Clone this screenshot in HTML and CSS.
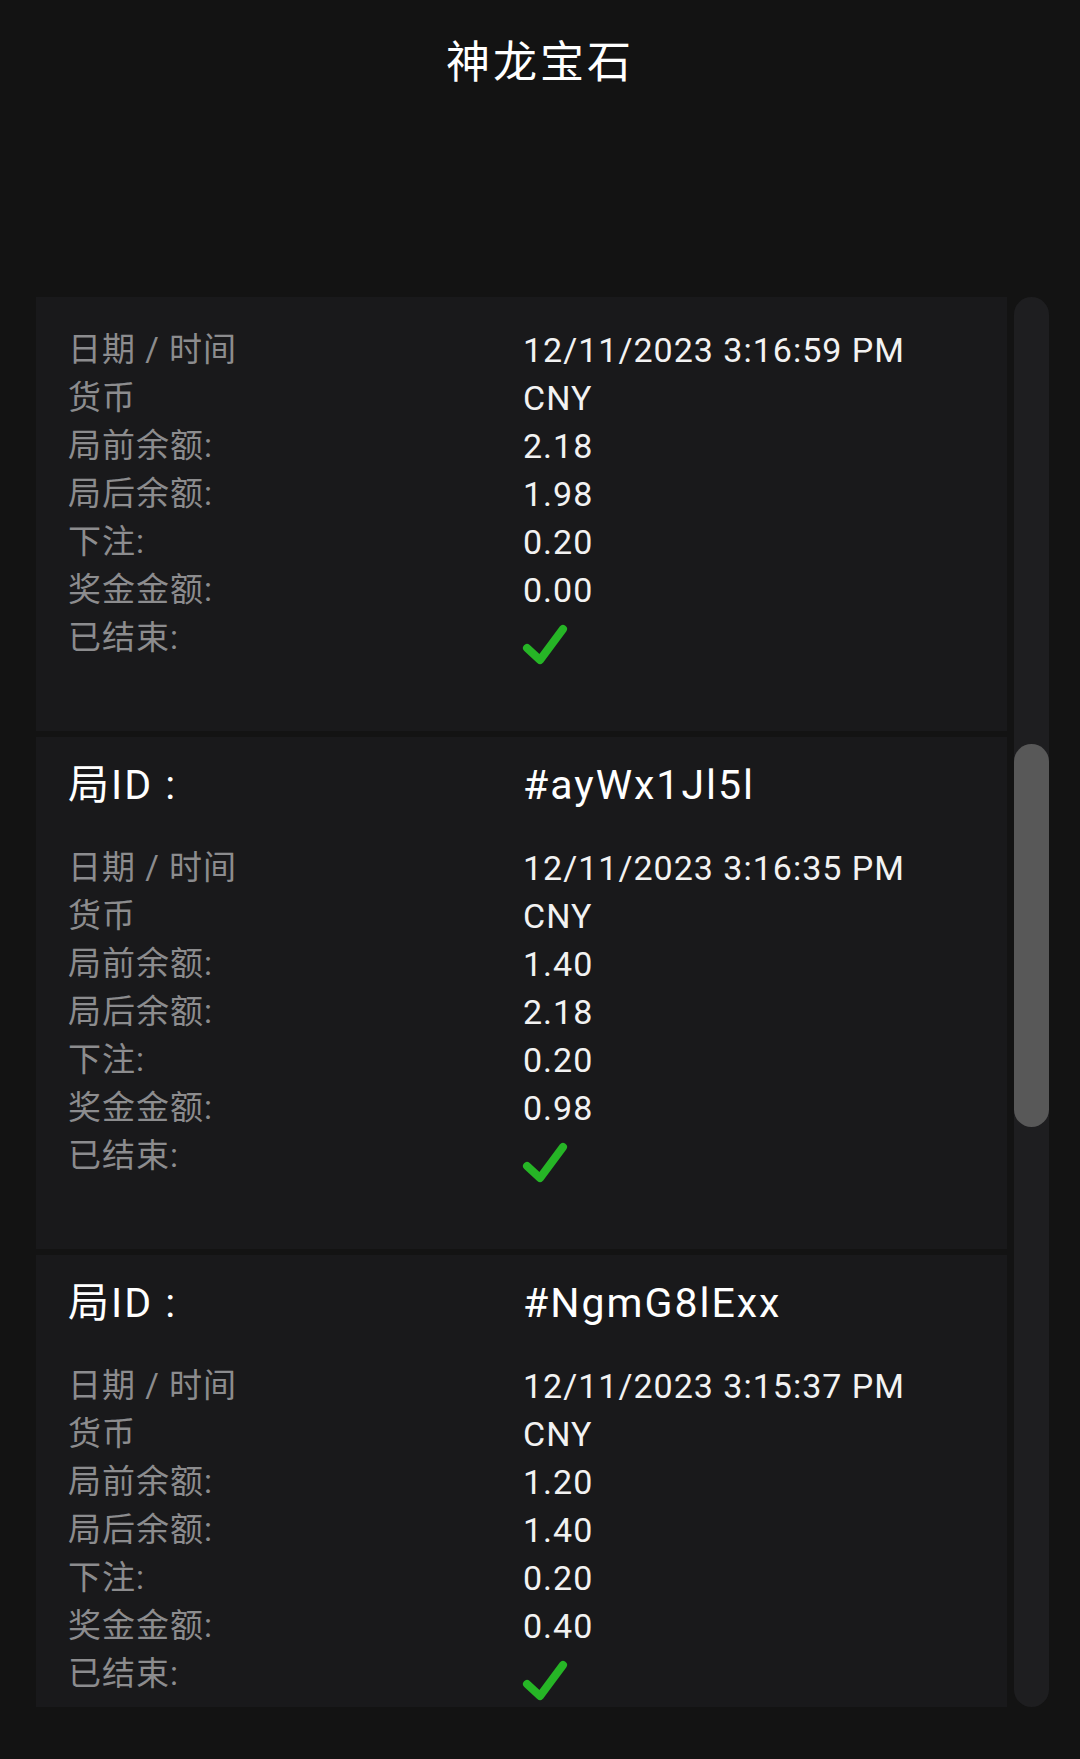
FILE: index.html
```html
<!DOCTYPE html>
<html lang="zh-CN">

<head>
    <meta charset="UTF-8">
    <meta name="viewport" content="width=device-width, initial-scale=1.0">
    <title>神龙宝石</title>
    <link rel="stylesheet" href="styles.css">
</head>

<body>
    <header id="top">
        <h1>神龙宝石</h1>
    </header>

    <main id="history">
        <div class="viewport">
            <div class="list">
                <!-- first round is scrolled past its id line -->
                <section class="round scrolled">
                    <dl class="details">
                        <dt>日期 / 时间</dt>
                        <dd>12/11/2023 3:16:59 PM</dd>
                        <dt>货币</dt>
                        <dd>CNY</dd>
                        <dt>局前余额:</dt>
                        <dd>2.18</dd>
                        <dt>局后余额:</dt>
                        <dd>1.98</dd>
                        <dt>下注:</dt>
                        <dd>0.20</dd>
                        <dt>奖金金额:</dt>
                        <dd>0.00</dd>
                        <dt>已结束:</dt>
                        <dd class="done">
                            <svg width="48" height="52" viewBox="0 0 48 52"><polyline points="5,34 18,46 41,15" /></svg>
                        </dd>
                    </dl>
                </section>

                <section class="round">
                    <div class="round-id">
                        <span>局ID :</span>
                        <span>#ayWx1Jl5l</span>
                    </div>
                    <dl class="details">
                        <dt>日期 / 时间</dt>
                        <dd>12/11/2023 3:16:35 PM</dd>
                        <dt>货币</dt>
                        <dd>CNY</dd>
                        <dt>局前余额:</dt>
                        <dd>1.40</dd>
                        <dt>局后余额:</dt>
                        <dd>2.18</dd>
                        <dt>下注:</dt>
                        <dd>0.20</dd>
                        <dt>奖金金额:</dt>
                        <dd>0.98</dd>
                        <dt>已结束:</dt>
                        <dd class="done">
                            <svg width="48" height="52" viewBox="0 0 48 52"><polyline points="5,34 18,46 41,15" /></svg>
                        </dd>
                    </dl>
                </section>

                <section class="round">
                    <div class="round-id">
                        <span>局ID :</span>
                        <span>#NgmG8lExx</span>
                    </div>
                    <dl class="details">
                        <dt>日期 / 时间</dt>
                        <dd>12/11/2023 3:15:37 PM</dd>
                        <dt>货币</dt>
                        <dd>CNY</dd>
                        <dt>局前余额:</dt>
                        <dd>1.20</dd>
                        <dt>局后余额:</dt>
                        <dd>1.40</dd>
                        <dt>下注:</dt>
                        <dd>0.20</dd>
                        <dt>奖金金额:</dt>
                        <dd>0.40</dd>
                        <dt>已结束:</dt>
                        <dd class="done">
                            <svg width="48" height="52" viewBox="0 0 48 52"><polyline points="5,34 18,46 41,15" /></svg>
                        </dd>
                    </dl>
                </section>
            </div>
        </div>

        <div class="track">
            <div class="thumb"></div>
        </div>
    </main>
</body>

</html>
```

FILE: styles.css
```css
body {
    font-family: Roboto, "Noto Sans CJK SC", sans-serif;
    margin: 0;
    background: #131313;
    color: #f2f2f2;
}

#top {
    height: 297px;
    box-sizing: border-box;
    padding-top: 35px;
}

h1 {
    margin: 0;
    font-size: 44px;
    font-weight: 400;
    line-height: 57px;
    letter-spacing: 3px;
    text-align: center;
    color: #ffffff;
}

#history {
    display: flex;
    gap: 7px;
    height: 1410px;
    margin: 0 31px 0 36px;
}

.viewport {
    flex: 1;
    overflow: hidden;
}

.list {
    display: flex;
    flex-direction: column;
    gap: 6px;
}

.round {
    background: #19191b;
    padding: 24px 32px 65px;
}

.round.scrolled {
    padding-top: 29px;
}

.round-id,
.details {
    display: grid;
    grid-template-columns: 455px 1fr;
    margin: 0;
}

.round-id {
    font-size: 41px;
    line-height: 48px;
    letter-spacing: 2px;
    color: #ffffff;
    margin-bottom: 35px;
}

.details dt,
.details dd {
    margin: 0;
    line-height: 48px;
}

.details dt {
    font-size: 33px;
    letter-spacing: 1px;
    color: #8c8c8e;
}

.details dd {
    font-size: 34px;
    letter-spacing: 1px;
    color: #f2f2f2;
}

.done svg {
    display: block;
    margin-left: -1px;
}

.done polyline {
    fill: none;
    stroke: #26b526;
    stroke-width: 8;
    stroke-linecap: round;
    stroke-linejoin: round;
}

.track {
    width: 35px;
    background: #1e1e20;
    border-radius: 18px;
}

.thumb {
    margin-top: 447px;
    height: 383px;
    background: #585858;
    border-radius: 18px;
}
```
